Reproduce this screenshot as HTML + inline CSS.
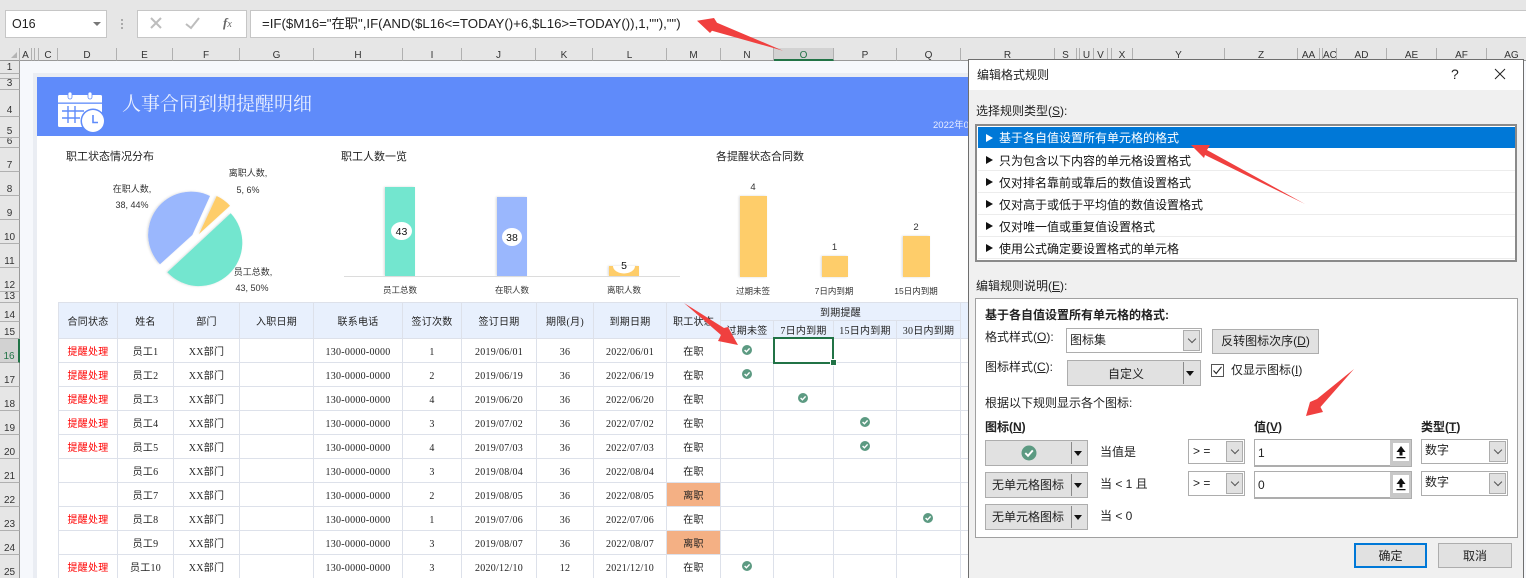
<!DOCTYPE html>
<html><head><meta charset="utf-8">
<style>
html,body{margin:0;padding:0;width:1526px;height:578px;overflow:hidden;background:#fff}
body{position:relative;font-family:"Liberation Sans","Noto Sans CJK SC",sans-serif;color:#222}
div{box-sizing:border-box}
.a{position:absolute;white-space:nowrap}
.ch{position:absolute;top:48px;height:13px;font-size:10px;line-height:16px;text-align:center;color:#333;border-right:1px solid #b0b0b0;background:#e6e6e6;overflow:hidden;border-bottom:1px solid #999}
.rh{position:absolute;left:0;width:20px;font-size:10px;text-align:center;color:#333;background:#e6e6e6;border-bottom:1px solid #b0b0b0;border-right:1px solid #999;overflow:hidden;display:flex;align-items:flex-end;justify-content:center;line-height:10px}
.c{font-size:11px;color:#222;font-family:"Liberation Sans","Noto Sans CJK SC",sans-serif}
.ct{font-size:9px;color:#333;text-align:center;width:70px;line-height:14px;font-family:"Liberation Sans","WenQuanYi Zen Hei","Noto Sans CJK SC",sans-serif}
.cl{font-size:8.5px}
table{position:absolute;left:58px;top:302px;border-collapse:collapse;table-layout:fixed;width:910px;font-family:"Liberation Serif","WenQuanYi Zen Hei","Noto Sans CJK SC",sans-serif;font-size:10px;color:#222;letter-spacing:.25px}
td,th{box-sizing:border-box;border:1px solid #dde1ea;padding:0;text-align:center;font-weight:normal;overflow:hidden;white-space:nowrap;height:24px}
td:nth-child(5),td:nth-child(6),td:nth-child(7),td:nth-child(8),td:nth-child(9){padding-top:4px}
th{background:#e8f0fd;height:18px}
td.r{color:#f00}
td.o{background:#f4b084}
.d{font-size:12px;color:#222;line-height:16px}
.b{font-weight:bold}
.li{position:absolute;left:978px;width:537px;height:22px;font-size:12px;line-height:24px;padding-left:21px;border-bottom:1px solid #ececec;color:#111;background:#fff;white-space:nowrap}
.li i{position:absolute;left:8px;top:7px;width:0;height:0;border-left:7px solid #111;border-top:4px solid transparent;border-bottom:4px solid transparent}
.btn{position:absolute;background:#e1e1e1;border:1px solid #adadad;font-size:12px;text-align:center;color:#222;white-space:nowrap}
.sel{position:absolute;background:#fff;border:1px solid #adadad;font-size:12px;color:#222;white-space:nowrap}
.ar{position:absolute;background:#e1e1e1;border:1px solid #adadad}
.ar:after{content:"";position:absolute;left:50%;top:50%;width:5px;height:5px;margin:-5px 0 0 -3px;border-right:1px solid #555;border-bottom:1px solid #555;transform:rotate(45deg)}
.tri{position:absolute;width:0;height:0;border-top:5px solid #111;border-left:4px solid transparent;border-right:4px solid transparent}
.sp{position:absolute;width:1px;background:#8a8a8a}
u{text-decoration:underline}
</style></head><body>

<!-- toolbar -->
<div class="a" style="left:0;top:0;width:1526px;height:48px;background:#e6e6e6"></div>
<div class="a" style="left:5px;top:10px;width:102px;height:28px;background:#fff;border:1px solid #c6c6c6;font-size:12.5px;line-height:26px;padding-left:6px;color:#222">O16</div>
<div class="a" style="left:93px;top:22px;width:0;height:0;border-top:4px solid #777;border-left:4px solid transparent;border-right:4px solid transparent"></div>
<div class="a" style="left:121px;top:19px;width:2px;height:2px;background:#aaa;box-shadow:0 4px 0 #aaa,0 8px 0 #aaa"></div>
<div class="a" style="left:137px;top:10px;width:110px;height:28px;background:#fff;border:1px solid #c6c6c6"></div>
<div class="a" style="left:250px;top:10px;width:1276px;height:28px;background:#fff;border:1px solid #c6c6c6;border-right:0;font-size:13.25px;line-height:26px;padding-left:11px;color:#222;font-family:'Liberation Sans','Noto Sans CJK SC',sans-serif">=IF($M16="在职",IF(AND($L16&lt;=TODAY()+6,$L16&gt;=TODAY()),1,""),"")</div>
<div class="a" style="left:223px;top:14px;font:italic 13px 'Liberation Serif',serif;color:#666;line-height:18px"><b>f</b><span style="font-size:10px">x</span></div>

<!-- sheet bg -->
<div class="a" style="left:20px;top:61px;width:1506px;height:517px;background:#f6f8fc"></div>
<div class="a" style="left:33px;top:73px;width:4px;height:505px;background:#eaedf3"></div>
<div class="a" style="left:33px;top:73px;width:940px;height:4px;background:#eaedf3"></div>
<div class="a" style="left:37px;top:77px;width:931px;height:59px;background:#5f8bfa"></div>
<div class="a" style="left:37px;top:136px;width:931px;height:442px;background:#fff"></div>

<!-- column headers -->
<div class="a" style="left:0;top:48px;width:20px;height:13px;background:#e6e6e6;border-bottom:1px solid #999;border-right:1px solid #b0b0b0"></div>
<div class="a" style="left:11px;top:52px;width:0;height:0;border-bottom:6px solid #b4b4b4;border-left:6px solid transparent"></div>
<div class="ch" style="left:20px;width:12px">A</div>
<div class="ch" style="left:32px;width:3px"></div>
<div class="ch" style="left:35px;width:4px"></div>
<div class="ch" style="left:39px;width:19px">C</div>
<div class="ch" style="left:58px;width:59px">D</div>
<div class="ch" style="left:117px;width:56px">E</div>
<div class="ch" style="left:173px;width:67px">F</div>
<div class="ch" style="left:240px;width:74px">G</div>
<div class="ch" style="left:314px;width:89px">H</div>
<div class="ch" style="left:403px;width:59px">I</div>
<div class="ch" style="left:462px;width:74px">J</div>
<div class="ch" style="left:536px;width:57px">K</div>
<div class="ch" style="left:593px;width:74px">L</div>
<div class="ch" style="left:667px;width:54px">M</div>
<div class="ch" style="left:721px;width:53px">N</div>
<div class="ch" style="left:774px;width:60px;background:#d2d2d2;border-bottom:2px solid #217346;color:#217346">O</div>
<div class="ch" style="left:834px;width:63px">P</div>
<div class="ch" style="left:897px;width:64px">Q</div>
<div class="ch" style="left:961px;width:94px">R</div>
<div class="ch" style="left:1055px;width:22px">S</div>
<div class="ch" style="left:1077px;width:3px"></div>
<div class="ch" style="left:1080px;width:14px">U</div>
<div class="ch" style="left:1094px;width:14px">V</div>
<div class="ch" style="left:1108px;width:4px"></div>
<div class="ch" style="left:1112px;width:21px">X</div>
<div class="ch" style="left:1133px;width:92px">Y</div>
<div class="ch" style="left:1225px;width:73px">Z</div>
<div class="ch" style="left:1298px;width:22px">AA</div>
<div class="ch" style="left:1320px;width:3px"></div>
<div class="ch" style="left:1323px;width:14px">AC</div>
<div class="ch" style="left:1337px;width:50px">AD</div>
<div class="ch" style="left:1387px;width:50px">AE</div>
<div class="ch" style="left:1437px;width:50px">AF</div>
<div class="ch" style="left:1487px;width:39px;border-right:0;padding-left:10px">AG</div>

<!-- row headers -->
<div class="rh" style="top:61px;height:13px">1</div>
<div class="rh" style="top:74px;height:5px"></div>
<div class="rh" style="top:79px;height:11px">3</div>
<div class="rh" style="top:90px;height:27px">4</div>
<div class="rh" style="top:117px;height:21px">5</div>
<div class="rh" style="top:138px;height:10px">6</div>
<div class="rh" style="top:148px;height:24px">7</div>
<div class="rh" style="top:172px;height:24px">8</div>
<div class="rh" style="top:196px;height:24px">9</div>
<div class="rh" style="top:220px;height:24px">10</div>
<div class="rh" style="top:244px;height:24px">11</div>
<div class="rh" style="top:268px;height:24px">12</div>
<div class="rh" style="top:292px;height:11px">13</div>
<div class="rh" style="top:303px;height:19px">14</div>
<div class="rh" style="top:322px;height:17px">15</div>
<div class="rh" style="top:339px;height:24px;background:#d2d2d2;border-right:2px solid #217346;color:#217346">16</div>
<div class="rh" style="top:363px;height:24px">17</div>
<div class="rh" style="top:387px;height:24px">18</div>
<div class="rh" style="top:411px;height:24px">19</div>
<div class="rh" style="top:435px;height:24px">20</div>
<div class="rh" style="top:459px;height:24px">21</div>
<div class="rh" style="top:483px;height:24px">22</div>
<div class="rh" style="top:507px;height:24px">23</div>
<div class="rh" style="top:531px;height:24px">24</div>
<div class="rh" style="top:555px;height:24px">25</div>

<!-- banner -->
<div class="a" style="left:122px;top:93px;font-size:19px;line-height:24px;color:#eaf0ff;font-family:'Liberation Serif','Noto Serif CJK SC',serif">人事合同到期提醒明细</div>
<div class="a" style="left:933px;top:119px;font-size:9.5px;line-height:14px;color:#e8eeff">2022年0</div>

<!-- charts text -->
<div class="a c" style="left:66px;top:149px;line-height:16px">职工状态情况分布</div>
<div class="a c" style="left:341px;top:149px;line-height:16px">职工人数一览</div>
<div class="a c" style="left:716px;top:149px;line-height:16px">各提醒状态合同数</div>
<div class="a ct" style="left:213px;top:166px">离职人数,</div>
<div class="a ct" style="left:213px;top:183px">5, 6%</div>
<div class="a ct" style="left:97px;top:182px">在职人数,</div>
<div class="a ct" style="left:97px;top:198px">38, 44%</div>
<div class="a ct" style="left:218px;top:265px">员工总数,</div>
<div class="a ct" style="left:217px;top:281px">43, 50%</div>
<div class="a ct cl" style="left:365px;top:283px">员工总数</div>
<div class="a ct cl" style="left:477px;top:283px">在职人数</div>
<div class="a ct cl" style="left:589px;top:283px">离职人数</div>
<div class="a ct cl" style="left:718px;top:284px">过期未签</div>
<div class="a ct cl" style="left:799px;top:284px">7日内到期</div>
<div class="a ct cl" style="left:881px;top:284px">15日内到期</div>

<!-- table -->
<table>
<colgroup><col style="width:59px"><col style="width:56px"><col style="width:66px"><col style="width:74px"><col style="width:89px"><col style="width:59px"><col style="width:75px"><col style="width:57px"><col style="width:73px"><col style="width:54px"><col style="width:53px"><col style="width:60px"><col style="width:63px"><col style="width:64px"><col style="width:8px"></colgroup>
<tr><th rowspan="2">合同状态</th><th rowspan="2">姓名</th><th rowspan="2">部门</th><th rowspan="2">入职日期</th><th rowspan="2">联系电话</th><th rowspan="2">签订次数</th><th rowspan="2">签订日期</th><th rowspan="2">期限(月)</th><th rowspan="2">到期日期</th><th rowspan="2">职工状态</th><th colspan="4">到期提醒</th><th rowspan="2"></th></tr>
<tr><th>过期未签</th><th>7日内到期</th><th>15日内到期</th><th>30日内到期</th></tr>
<tr><td class="r">提醒处理</td><td>员工1</td><td>XX部门</td><td></td><td>130-0000-0000</td><td>1</td><td>2019/06/01</td><td>36</td><td>2022/06/01</td><td>在职</td><td></td><td></td><td></td><td></td><td></td></tr>
<tr><td class="r">提醒处理</td><td>员工2</td><td>XX部门</td><td></td><td>130-0000-0000</td><td>2</td><td>2019/06/19</td><td>36</td><td>2022/06/19</td><td>在职</td><td></td><td></td><td></td><td></td><td></td></tr>
<tr><td class="r">提醒处理</td><td>员工3</td><td>XX部门</td><td></td><td>130-0000-0000</td><td>4</td><td>2019/06/20</td><td>36</td><td>2022/06/20</td><td>在职</td><td></td><td></td><td></td><td></td><td></td></tr>
<tr><td class="r">提醒处理</td><td>员工4</td><td>XX部门</td><td></td><td>130-0000-0000</td><td>3</td><td>2019/07/02</td><td>36</td><td>2022/07/02</td><td>在职</td><td></td><td></td><td></td><td></td><td></td></tr>
<tr><td class="r">提醒处理</td><td>员工5</td><td>XX部门</td><td></td><td>130-0000-0000</td><td>4</td><td>2019/07/03</td><td>36</td><td>2022/07/03</td><td>在职</td><td></td><td></td><td></td><td></td><td></td></tr>
<tr><td></td><td>员工6</td><td>XX部门</td><td></td><td>130-0000-0000</td><td>3</td><td>2019/08/04</td><td>36</td><td>2022/08/04</td><td>在职</td><td></td><td></td><td></td><td></td><td></td></tr>
<tr><td></td><td>员工7</td><td>XX部门</td><td></td><td>130-0000-0000</td><td>2</td><td>2019/08/05</td><td>36</td><td>2022/08/05</td><td class="o">离职</td><td></td><td></td><td></td><td></td><td></td></tr>
<tr><td class="r">提醒处理</td><td>员工8</td><td>XX部门</td><td></td><td>130-0000-0000</td><td>1</td><td>2019/07/06</td><td>36</td><td>2022/07/06</td><td>在职</td><td></td><td></td><td></td><td></td><td></td></tr>
<tr><td></td><td>员工9</td><td>XX部门</td><td></td><td>130-0000-0000</td><td>3</td><td>2019/08/07</td><td>36</td><td>2022/08/07</td><td class="o">离职</td><td></td><td></td><td></td><td></td><td></td></tr>
<tr><td class="r">提醒处理</td><td>员工10</td><td>XX部门</td><td></td><td>130-0000-0000</td><td>3</td><td>2020/12/10</td><td>12</td><td>2021/12/10</td><td>在职</td><td></td><td></td><td></td><td></td><td></td></tr>
</table>

<!-- selection -->
<div class="a" style="left:773px;top:337px;width:61px;height:27px;border:2px solid #217346"></div>
<div class="a" style="left:831px;top:360px;width:5px;height:5px;background:#217346;outline:1px solid #fff"></div>

<!-- chart & icon graphics -->
<svg class="a" style="left:0;top:0" width="968" height="578" viewBox="0 0 968 578">
<defs>
<g id="ck"><circle r="5" fill="#5c9a82"/><polyline points="-2.4,0 -.6,1.8 2.6,-1.6" fill="none" stroke="#fff" stroke-width="1.4"/></g>
<filter id="sh" x="-20%" y="-20%" width="140%" height="140%"><feDropShadow dx="-1" dy="0" stdDeviation="1" flood-color="#000" flood-opacity=".15"/></filter>
</defs>
<!-- calendar -->
<g>
<rect x="58" y="95" width="44" height="32" rx="1.5" fill="#fff"/>
<rect x="58" y="102.5" width="44" height="1.3" fill="#5f8bfa"/>
<rect x="68" y="92" width="4" height="7" rx="2" fill="#fff" stroke="#5f8bfa" stroke-width=".8"/>
<rect x="88" y="92" width="4" height="7" rx="2" fill="#fff" stroke="#5f8bfa" stroke-width=".8"/>
<path d="M62 111H84M62 118H80M68 106V123M75 106V123" stroke="#5f8bfa" stroke-width="1.4" fill="none"/>
<circle cx="93" cy="121" r="12.5" fill="#5f8bfa"/>
<circle cx="93" cy="121" r="11" fill="#fff"/>
<path d="M93 115V122.5H98" stroke="#5f8bfa" stroke-width="1.6" fill="none"/>
</g>
<!-- pie -->
<g filter="url(#sh)">
<path d="M192.3 235L210 196A43 43 0 0 0 160 264.3Z" fill="#9ab7fd"/>
<path d="M199 234L216.7 196A42 42 0 0 1 230 205.7Z" fill="#fecd6a"/>
<path d="M230.7 213.3A43.2 43.2 0 0 1 167.3 272.3Z" fill="#73e6cf"/>
</g>
<!-- bars -->
<rect x="385" y="187" width="30" height="89" fill="#73e6cf" filter="url(#sh)"/>
<rect x="497" y="197" width="30" height="79" fill="#9ab7fd" filter="url(#sh)"/>
<rect x="609" y="266" width="30" height="10" fill="#fecd6a" filter="url(#sh)"/>
<line x1="344" y1="276.5" x2="680" y2="276.5" stroke="#dcdcdc"/>
<ellipse cx="401.5" cy="231" rx="10.5" ry="9" fill="#fff"/>
<ellipse cx="512" cy="237" rx="10" ry="9" fill="#fff"/>
<path d="M613 266H635A11 7.5 0 0 1 613 266Z" fill="#fff"/>
<text x="401.5" y="235" font-size="10.5" text-anchor="middle" fill="#111" font-family="Liberation Sans">43</text>
<text x="512" y="241" font-size="10.5" text-anchor="middle" fill="#111" font-family="Liberation Sans">38</text>
<text x="624" y="269" font-size="10.5" text-anchor="middle" fill="#111" font-family="Liberation Sans">5</text>
<rect x="740" y="196" width="27" height="81" fill="#fecd6a" filter="url(#sh)"/>
<rect x="822" y="256" width="26" height="21" fill="#fecd6a" filter="url(#sh)"/>
<rect x="903" y="236" width="27" height="41" fill="#fecd6a" filter="url(#sh)"/>
<text x="753" y="190" font-size="9.5" text-anchor="middle" fill="#333" font-family="Liberation Sans">4</text>
<text x="834.5" y="250" font-size="9.5" text-anchor="middle" fill="#333" font-family="Liberation Sans">1</text>
<text x="916" y="230" font-size="9.5" text-anchor="middle" fill="#333" font-family="Liberation Sans">2</text>
<!-- table icons -->
<use href="#ck" x="747" y="350"/>
<use href="#ck" x="747" y="374"/>
<use href="#ck" x="803" y="398"/>
<use href="#ck" x="865" y="422"/>
<use href="#ck" x="865" y="446"/>
<use href="#ck" x="928" y="518"/>
<use href="#ck" x="747" y="566"/>
</svg>

<!-- dialog -->
<div class="a" style="left:968px;top:59px;width:556px;height:520px;background:#f0f0f0;border:1px solid #6e6e6e"></div>
<div class="a" style="left:969px;top:60px;width:554px;height:30px;background:#fff"></div>
<div class="a d" style="left:977px;top:67px">编辑格式规则</div>
<div class="a" style="left:1451px;top:65px;font-size:14px;line-height:18px;color:#222">?</div>
<svg class="a" style="left:1494px;top:68px" width="12" height="12"><path d="M1 1L11 11M11 1L1 11" stroke="#222" stroke-width="1" fill="none"/></svg>

<div class="a d" style="left:976px;top:103px">选择规则类型(<u>S</u>):</div>
<div class="a" style="left:975px;top:124px;width:542px;height:138px;background:#fff;border:2px solid #8a8a8a"></div>
<div class="li" style="top:127px;height:21px;line-height:23px;background:#0078d7;color:#fff;border:0"><i style="border-left-color:#fff"></i>基于各自值设置所有单元格的格式</div>
<div class="li" style="top:149px"><i></i>只为包含以下内容的单元格设置格式</div>
<div class="li" style="top:171px"><i></i>仅对排名靠前或靠后的数值设置格式</div>
<div class="li" style="top:193px"><i></i>仅对高于或低于平均值的数值设置格式</div>
<div class="li" style="top:215px"><i></i>仅对唯一值或重复值设置格式</div>
<div class="li" style="top:237px;height:22px;border-bottom:1px solid #ececec"><i></i>使用公式确定要设置格式的单元格</div>

<div class="a d" style="left:976px;top:278px">编辑规则说明(<u>E</u>):</div>
<div class="a" style="left:975px;top:298px;width:543px;height:240px;background:#fff;border:1px solid #a0a0a0"></div>
<div class="a d b" style="left:985px;top:307px">基于各自值设置所有单元格的格式:</div>
<div class="a d" style="left:985px;top:329px">格式样式(<u>O</u>):</div>
<div class="sel" style="left:1066px;top:328px;width:136px;height:25px;line-height:22px;padding-left:3px">图标集</div>
<div class="ar" style="left:1183px;top:330px;width:17px;height:21px"></div>
<div class="btn" style="left:1212px;top:329px;width:107px;height:25px;line-height:23px">反转图标次序(<u>D</u>)</div>
<div class="a d" style="left:985px;top:359px">图标样式(<u>C</u>):</div>
<div class="btn" style="left:1067px;top:360px;width:134px;height:26px;line-height:26px;padding-right:16px">自定义</div>
<div class="sp" style="left:1183px;top:362px;height:22px"></div>
<div class="tri" style="left:1186px;top:371px"></div>
<div class="a" style="left:1211px;top:364px;width:13px;height:13px;background:#fff;border:1px solid #555"></div>
<svg class="a" style="left:1212px;top:365px" width="11" height="11"><path d="M1.5 5.5L4.2 8.5L9.5 1.8" stroke="#222" fill="none" stroke-width="1.1"/></svg>
<div class="a d" style="left:1231px;top:362px">仅显示图标(<u>I</u>)</div>
<div class="a d" style="left:985px;top:395px">根据以下规则显示各个图标:</div>
<div class="a d b" style="left:985px;top:419px">图标(<u>N</u>)</div>
<div class="a d b" style="left:1254px;top:419px">值(<u>V</u>)</div>
<div class="a d b" style="left:1421px;top:419px">类型(<u>T</u>)</div>

<!-- row1 -->
<div class="btn" style="left:985px;top:440px;width:103px;height:26px"></div>
<div class="sp" style="left:1071px;top:442px;height:22px"></div>
<div class="tri" style="left:1074px;top:451px"></div>
<svg class="a" style="left:1021px;top:445px" width="16" height="16"><circle cx="8" cy="8" r="7.5" fill="#5c9a82"/><polyline points="4.3,8 7,10.8 11.8,5.4" fill="none" stroke="#fff" stroke-width="1.9"/></svg>
<div class="a d" style="left:1100px;top:444px">当值是</div>
<div class="sel" style="left:1188px;top:439px;width:57px;height:25px;line-height:23px;padding-left:4px">&gt; =</div>
<div class="ar" style="left:1226px;top:441px;width:17px;height:21px"></div>
<div class="sel" style="left:1254px;top:439px;width:158px;height:28px;line-height:26px;padding-left:3px;border-width:1px 2px 2px 1px">1</div>
<div class="a" style="left:1390px;top:440px;width:21px;height:26px;background:#c8c8c8"></div>
<div class="a" style="left:1393px;top:443px;width:16px;height:18px;background:#fff"></div>
<svg class="a" style="left:1394px;top:445px" width="14" height="14"><path d="M7 1L2.5 7H5.5V10.5H8.5V7H11.5ZM2.5 12H11.5V13.2H2.5Z" fill="#111"/></svg>
<div class="sel" style="left:1421px;top:439px;width:87px;height:25px;line-height:21px;padding-left:3px">数字</div>
<div class="ar" style="left:1489px;top:441px;width:17px;height:21px"></div>
<!-- row2 -->
<div class="btn" style="left:985px;top:472px;width:103px;height:26px;line-height:24px;padding-right:17px">无单元格图标</div>
<div class="sp" style="left:1071px;top:474px;height:22px"></div>
<div class="tri" style="left:1074px;top:483px"></div>
<div class="a d" style="left:1100px;top:476px">当 &lt; 1 且</div>
<div class="sel" style="left:1188px;top:471px;width:57px;height:25px;line-height:23px;padding-left:4px">&gt; =</div>
<div class="ar" style="left:1226px;top:473px;width:17px;height:21px"></div>
<div class="sel" style="left:1254px;top:471px;width:158px;height:28px;line-height:26px;padding-left:3px;border-width:1px 2px 2px 1px">0</div>
<div class="a" style="left:1390px;top:472px;width:21px;height:26px;background:#c8c8c8"></div>
<div class="a" style="left:1393px;top:475px;width:16px;height:18px;background:#fff"></div>
<svg class="a" style="left:1394px;top:477px" width="14" height="14"><path d="M7 1L2.5 7H5.5V10.5H8.5V7H11.5ZM2.5 12H11.5V13.2H2.5Z" fill="#111"/></svg>
<div class="sel" style="left:1421px;top:471px;width:87px;height:25px;line-height:21px;padding-left:3px">数字</div>
<div class="ar" style="left:1489px;top:473px;width:17px;height:21px"></div>
<!-- row3 -->
<div class="btn" style="left:985px;top:504px;width:103px;height:26px;line-height:24px;padding-right:17px">无单元格图标</div>
<div class="sp" style="left:1071px;top:506px;height:22px"></div>
<div class="tri" style="left:1074px;top:515px"></div>
<div class="a d" style="left:1100px;top:508px">当 &lt; 0</div>
<!-- ok/cancel -->
<div class="btn" style="left:1354px;top:543px;width:73px;height:25px;line-height:23px;border:2px solid #0078d7">确定</div>
<div class="btn" style="left:1438px;top:543px;width:74px;height:25px;line-height:24px">取消</div>

<!-- red arrows -->
<svg class="a" style="left:0;top:0" width="1526" height="578" viewBox="0 0 1526 578">
<g fill="#f0403f">
<polygon points="697,20.7 714,18 717,22.7 783,50.7 712,30.7 710,33"/>
<polygon points="1191,145 1210,145 1207,150 1305,204 1205,155 1204,158"/>
<polygon points="1306,416 1310,402 1317,399 1354,369 1320.5,407 1323,412"/>
<polygon points="684,303 724,328 728,327 738,345 718,341 721,335"/>
</g>
<g fill="none" stroke="#bdbdbd" stroke-width="2"><path d="M151 18L161 28M161 18L151 28"/><path d="M186 24L191 28L199 18"/></g>
</svg>
</body></html>
